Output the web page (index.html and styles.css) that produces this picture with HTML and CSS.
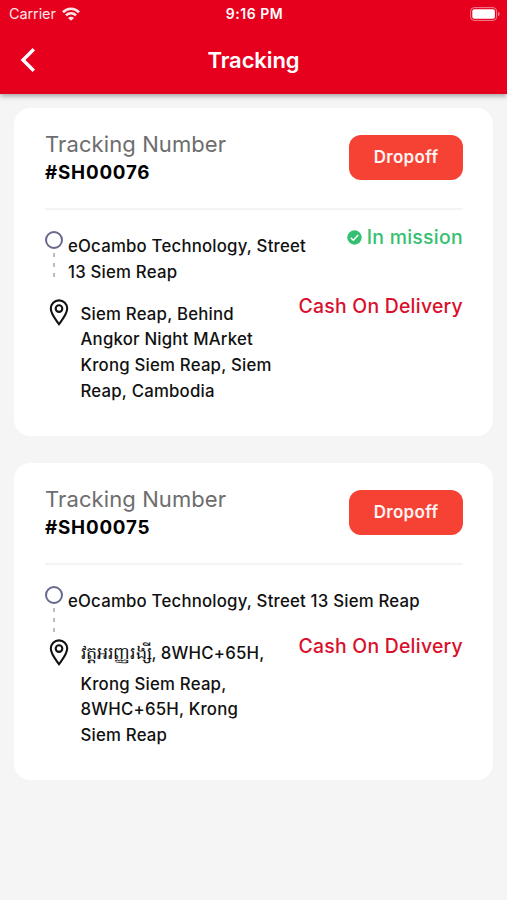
FILE: index.html
```html
<!doctype html>
<html lang="en">
<head>
  <meta charset="UTF-8" />
  <meta name="viewport" content="width=device-width, initial-scale=1.0" />
  <title>Tracking</title>
  <link rel="stylesheet" href="styles.css">
</head>
<body>

  <header class="header">
    <div class="status-bar">
      <div class="carrier">
        <span>Carrier</span>
        <svg class="wifi" viewBox="0 0 18 14" fill="none" stroke="#fff" stroke-width="2.7">
          <path d="M1 5.2C5.6 .6 12.4 .6 17 5.2" />
          <path d="M4 8.4c2.9-2.8 7.1-2.8 10 0" />
          <path d="M9 13.8 6 10.9c1.7-1.6 4.3-1.6 6 0z" fill="#fff" stroke="none" />
        </svg>
      </div>
      <span class="time">9:16 PM</span>
      <svg class="battery" viewBox="0 0 30 14">
        <rect x=".6" y=".6" width="26" height="12.8" rx="3.6" fill="none" stroke="#fff" stroke-opacity=".5" />
        <rect x="2.3" y="2.3" width="22.6" height="9.4" rx="2" fill="#fff" />
        <path d="M28 4.8c2.2.8 2.2 3.6 0 4.4z" fill="#fff" fill-opacity=".5" />
      </svg>
    </div>
    <div class="nav-bar">
      <svg class="back" viewBox="0 0 16 24" fill="none" stroke="#fff" stroke-width="3.4">
        <path d="M13.8 1.2 3 12l10.8 10.8" />
      </svg>
      <h1 class="title">Tracking</h1>
    </div>
  </header>

  <main class="list">

    <section class="card">
      <div class="card-top">
        <div>
          <p class="label">Tracking Number</p>
          <p class="number">#SH00076</p>
        </div>
        <button class="dropoff">Dropoff</button>
      </div>
      <div class="row">
        <div class="stop">
          <div class="line">
            <span class="circle"></span>
            <span class="dashes"></span>
          </div>
          <p class="address">eOcambo Technology, Street<br>13 Siem Reap</p>
        </div>
        <p class="mission">
          <svg class="check" viewBox="0 0 16 16">
            <circle cx="8" cy="8" r="7.7" fill="#34bf71" />
            <path d="m4 8.3 2.7 2.6L12 5.3" fill="none" stroke="#fff" stroke-width="1.6" />
          </svg>
          <span>In mission</span>
        </p>
      </div>
      <div class="row to">
        <div class="stop">
          <svg class="pin" viewBox="0 0 20 27" fill="none" stroke="#111" stroke-width="2.1">
            <path d="M10 25.2C6.8 20.8 1.8 15 1.8 9.6a8.2 8.2 0 0 1 16.4 0c0 5.4-5 11.2-8.2 15.6z" />
            <circle cx="10" cy="9.6" r="3.3" />
          </svg>
          <p class="address">Siem Reap, Behind<br>Angkor Night MArket<br>Krong Siem Reap, Siem<br>Reap, Cambodia</p>
        </div>
        <p class="payment">Cash On Delivery</p>
      </div>
    </section>

    <section class="card">
      <div class="card-top">
        <div>
          <p class="label">Tracking Number</p>
          <p class="number">#SH00075</p>
        </div>
        <button class="dropoff">Dropoff</button>
      </div>
      <div class="row short">
        <div class="stop">
          <div class="line">
            <span class="circle"></span>
            <span class="dashes"></span>
          </div>
          <p class="address">eOcambo Technology, Street 13 Siem Reap</p>
        </div>
      </div>
      <div class="row to">
        <div class="stop">
          <svg class="pin" viewBox="0 0 20 27" fill="none" stroke="#111" stroke-width="2.1">
            <path d="M10 25.2C6.8 20.8 1.8 15 1.8 9.6a8.2 8.2 0 0 1 16.4 0c0 5.4-5 11.2-8.2 15.6z" />
            <circle cx="10" cy="9.6" r="3.3" />
          </svg>
          <p class="address"><span class="first-line"><span class="khmer" lang="km">វត្តអរញ្ញរង្សី,</span> 8WHC+65H,</span>Krong Siem Reap,<br>8WHC+65H, Krong<br>Siem Reap</p>
        </div>
        <p class="payment">Cash On Delivery</p>
      </div>
    </section>

  </main>

</body>
</html>
```

FILE: styles.css
```css
* {
  box-sizing: border-box;
}

body {
  margin: 0;
  min-height: 900px;
  background: #f5f5f5;
  color: #111;
  font-family: Inter, "Liberation Sans", sans-serif;
}

p, h1 {
  margin: 0;
}

svg {
  display: block;
  flex: none;
}

.header {
  height: 94px;
  background: #e6001e;
  color: white;
  box-shadow: 0 2px 5px rgba(0, 0, 0, 0.35);
}

.status-bar {
  display: grid;
  grid-template-columns: 1fr auto 1fr;
  align-items: center;
  height: 27px;
  padding: 0 7px 0 9px;
}

.carrier {
  display: flex;
  align-items: center;
  gap: 6px;
  font-size: 14.5px;
  letter-spacing: -0.1px;
  opacity: 0.9;
}

.wifi {
  width: 18px;
  height: 14px;
}

.time {
  font-size: 14px;
  font-weight: 600;
  letter-spacing: 0.5px;
}

.battery {
  width: 30px;
  height: 14px;
  justify-self: end;
}

.nav-bar {
  display: grid;
  grid-template-columns: 1fr auto 1fr;
  align-items: center;
  height: 66px;
  padding: 0 20px;
}

.back {
  width: 16px;
  height: 24px;
}

.title {
  font-size: 22px;
  font-weight: 600;
  letter-spacing: -0.1px;
}

.list {
  display: flex;
  flex-direction: column;
  gap: 27px;
  padding: 14px;
}

.card {
  height: 327.5px;
  padding: 27px 30px 0 31px;
  border-radius: 16px;
  background: white;
}

.card + .card {
  height: 317px;
}

.card-top {
  display: flex;
  justify-content: space-between;
  height: 75px;
  border-bottom: 2px solid #f4f4f4;
}

.label {
  color: #6d6d6d;
  font-size: 22px;
  letter-spacing: 0.1px;
  line-height: 29px;
  margin-top: -5px;
}

.number {
  color: black;
  font-size: 18.8px;
  font-weight: 700;
  letter-spacing: 0.8px;
  line-height: 28px;
}

.dropoff {
  width: 114px;
  height: 45px;
  padding: 0 0 1px;
  border: 0;
  border-radius: 12px;
  background: #f64234;
  color: #fff4f2;
  font-family: inherit;
  font-size: 17px;
  font-weight: 600;
  letter-spacing: 0.3px;
}

.row {
  display: flex;
  justify-content: space-between;
  height: 90px;
  padding-top: 21px;
}

.row.short {
  height: 75px;
}

.row.to {
  height: auto;
  padding-top: 0;
}

.stop {
  display: flex;
  white-space: nowrap;
}

.line {
  display: flex;
  flex-direction: column;
  align-items: center;
  gap: 4px;
  width: 18px;
  margin-right: 5px;
}

.circle {
  width: 18px;
  height: 18px;
  border: 2px solid #66688f;
  border-radius: 50%;
}

.dashes {
  width: 2px;
  height: 25px;
  background: repeating-linear-gradient(#bbb 0 4px, transparent 4px 10px);
}

.address {
  margin-top: 3px;
  font-size: 16.8px;
  font-weight: 500;
  letter-spacing: 0.2px;
  line-height: 25.7px;
}

.row.to .address {
  margin-top: 1.5px;
}

.pin {
  width: 20px;
  height: 27px;
  margin: -1px 11.5px 0 4px;
}

.mission {
  display: flex;
  align-items: center;
  gap: 5px;
  height: 26px;
  margin-top: -7px;
  margin-left: -20px;
  color: #34bf71;
  font-size: 19.4px;
  font-weight: 500;
  letter-spacing: 0.3px;
}

.check {
  width: 15px;
  height: 15px;
}

.payment {
  height: 26px;
  margin-top: -7px;
  color: #d90f2b;
  font-size: 19.4px;
  font-weight: 500;
  letter-spacing: 0.25px;
  line-height: 26px;
  white-space: nowrap;
}

.first-line {
  display: block;
  height: 30.5px;
  line-height: 24px;
}

.khmer {
  font-size: 17.5px;
  font-weight: 400;
  letter-spacing: -0.3px;
}
```
